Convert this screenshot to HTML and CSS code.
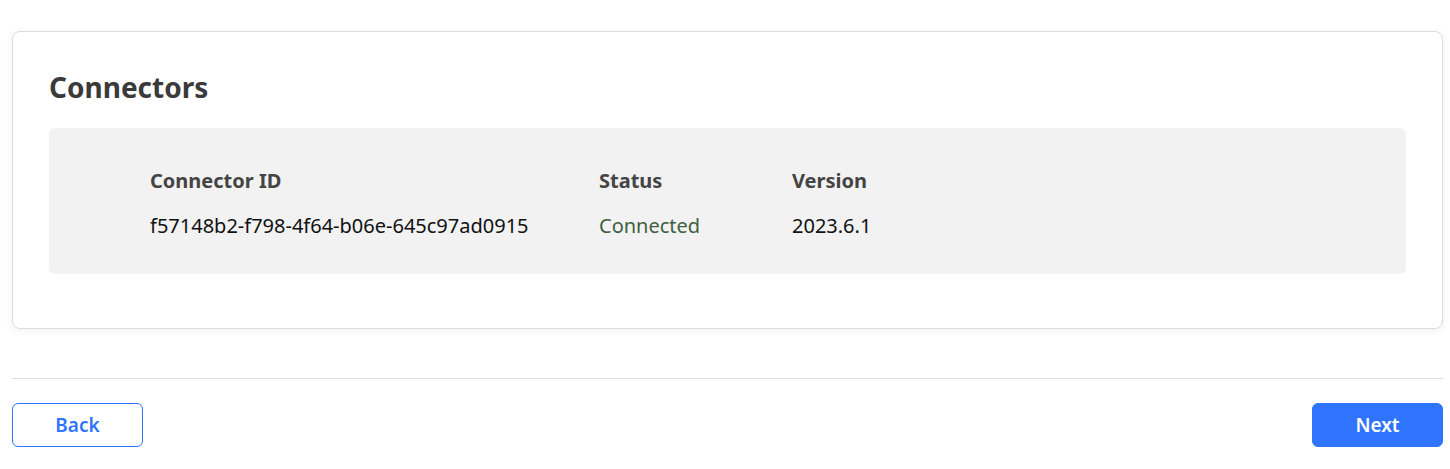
FILE: index.html
```html
<!DOCTYPE html>
<html>
<head>
<meta charset="utf-8">
<link rel="stylesheet" href="styles.css">
</head>
<body>
<div class="page">
  <section class="card">
    <h1 class="title">Connectors</h1>
    <div class="panel">
      <div class="table">
        <div class="th c1">Connector ID</div>
        <div class="th c2">Status</div>
        <div class="th c3">Version</div>
        <div class="td c1">f57148b2-f798-4f64-b06e-645c97ad0915</div>
        <div class="td c2 ok">Connected</div>
        <div class="td c3">2023.6.1</div>
      </div>
    </div>
  </section>
  <hr class="divider">
  <div class="actions">
    <button class="btn btn-outline">Back</button>
    <button class="btn btn-primary">Next</button>
  </div>
</div>
</body>
</html>
```
FILE: styles.css
```css
html, body { margin: 0; padding: 0; background: #fff; }
body { font-family: "Noto Sans", "Open Sans", sans-serif; color: #222; }
.page { padding: 31px 7px 0 12px; }
.card {
  border: 1px solid #dcdcdc;
  border-radius: 8px;
  box-shadow: 0 2px 8px rgba(0,0,0,0.06);
  padding: 38px 36px 54px 36px;
}
.title {
  margin: 0 0 24px 0;
  font-size: 28px;
  font-weight: 700;
  line-height: 34px;
  color: #3a3a3a;
}
.panel {
  background: #f2f2f2;
  border-radius: 6px;
  padding: 40px 0 35px 101px;
}
.table {
  display: grid;
  grid-template-columns: 449px 193px auto;
  row-gap: 19px;
  font-size: 20px;
  line-height: 26px;
}
.th { font-weight: 700; color: #444; }
.td { color: #111; }
.ok { color: #3f5f3f; }
.divider {
  margin: 49px 0 0 0;
  border: 0;
  border-top: 1px solid #dcdcdc;
  height: 0;
}
.actions {
  display: flex;
  justify-content: space-between;
  margin-top: 24px;
}
.btn {
  width: 131px;
  height: 44px;
  border-radius: 6px;
  font-family: inherit;
  font-size: 19px;
  font-weight: 600;
  cursor: pointer;
}
.btn-outline { background: #fff; border: 1px solid #2f74ff; color: #2f74ff; }
.btn-primary { background: #2f74ff; border: 1px solid #2f74ff; color: #fff; }
```
